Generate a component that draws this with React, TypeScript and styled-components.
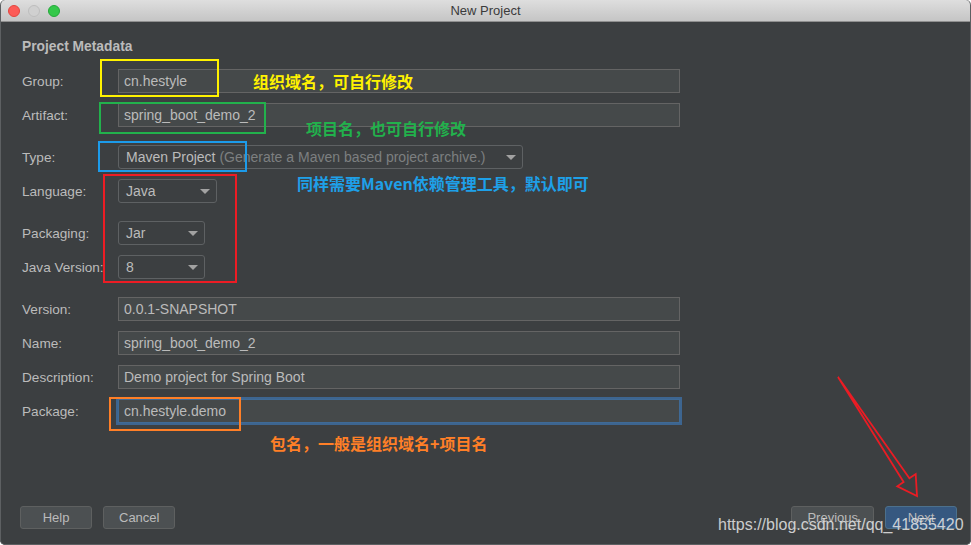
import React from "react";
import styled, { createGlobalStyle } from "styled-components";

const Global = createGlobalStyle`
  html, body { margin: 0; padding: 0; background: #ffffff; }
  body { width: 971px; height: 545px; overflow: hidden; font-family: "Liberation Sans", Arial, sans-serif; }
  #root { width: 971px; height: 545px; }
`;

const Window = styled.div`
  position: relative;
  width: 971px;
  height: 545px;
  display: flex;
  flex-direction: column;
  background: #3c3f41;
  border-radius: 5px;
  overflow: hidden;
  &::after {
    content: "";
    position: absolute;
    inset: 0;
    border: 1px solid #5d6062;
    border-top: none;
    border-radius: 5px;
    pointer-events: none;
  }
`;

const TitleBar = styled.div`
  flex: none;
  height: 21px;
  display: grid;
  grid-template-columns: 1fr auto 1fr;
  align-items: center;
  background: linear-gradient(#dedede, #c5c5c5);
  border-bottom: 1px solid #8f8f8f;
  font: 13px "Liberation Sans", Arial, sans-serif;
  color: #3b3b3b;
`;

const Lights = styled.div`
  display: flex;
  gap: 8px;
  padding-left: 8px;
`;

const Light = styled.span<{ $fill: string; $edge: string }>`
  width: 12px;
  height: 12px;
  border-radius: 50%;
  box-sizing: border-box;
  background: ${(p) => p.$fill};
  border: 1px solid ${(p) => p.$edge};
`;

const Content = styled.div`
  flex: 1;
  display: flex;
  flex-direction: column;
  padding: 17px 14px 16px 20px;
  color: #bbbbbb;
`;

const Heading = styled.div`
  font-weight: bold;
  font-size: 13.8px;
  line-height: 16px;
  color: #bbbbbb;
  margin: 0 0 14px 2px;
`;

const Row = styled.div<{ $top: number }>`
  display: flex;
  align-items: center;
  height: 24px;
  margin-top: ${(p) => p.$top}px;
`;

const Label = styled.div`
  width: 98px;
  padding-left: 2px;
  box-sizing: border-box;
  font-size: 13.6px;
  color: #bbbbbb;
  white-space: nowrap;
`;

const TextField = styled.div<{ $focused?: boolean }>`
  width: 562px;
  height: 24px;
  box-sizing: border-box;
  display: flex;
  align-items: center;
  padding: 0 5px;
  background: #45494a;
  border: 1px solid ${(p) => (p.$focused ? "#3f6a96" : "#646464")};
  box-shadow: ${(p) => (p.$focused ? "0 0 0 2px #3d6590" : "none")};
  font-size: 14px;
  color: #bbbbbb;
`;

const Combo = styled.div<{ $width: number }>`
  width: ${(p) => p.$width}px;
  height: 24px;
  box-sizing: border-box;
  display: flex;
  align-items: center;
  justify-content: space-between;
  padding: 0 6px 0 7px;
  border: 1px solid #5e6163;
  border-radius: 3px;
  background: #3c3f41;
  font-size: 14px;
  color: #bbbbbb;
  white-space: nowrap;
`;

const Hint = styled.span`
  color: #7d7f80;
`;

const Caret = styled.span`
  width: 0;
  height: 0;
  border-left: 5px solid transparent;
  border-right: 5px solid transparent;
  border-top: 5px solid #a2a2a2;
`;

const Footer = styled.div`
  margin-top: auto;
  display: flex;
  justify-content: space-between;
`;

const ButtonGroup = styled.div`
  display: flex;
  gap: 11px;
`;

const Button = styled.div<{ $primary?: boolean }>`
  min-width: 72px;
  height: 23px;
  box-sizing: border-box;
  padding: 0 15px;
  display: flex;
  align-items: center;
  justify-content: center;
  border-radius: 3px;
  font-size: 13px;
  color: #bbbbbb;
  background: ${(p) => (p.$primary ? "#365880" : "#4c5052")};
  border: 1px solid ${(p) => (p.$primary ? "#4c708c" : "#5e6060")};
`;

const Overlay = styled.div`
  position: absolute;
  inset: 0;
  pointer-events: none;
`;

const Mark = styled.div<{ $x: number; $y: number; $w: number; $h: number; $c: string }>`
  position: absolute;
  left: ${(p) => p.$x}px;
  top: ${(p) => p.$y}px;
  width: ${(p) => p.$w}px;
  height: ${(p) => p.$h}px;
  box-sizing: border-box;
  border: 2px solid ${(p) => p.$c};
`;

const Note = styled.div<{ $x: number; $y: number; $c: string }>`
  position: absolute;
  left: ${(p) => p.$x}px;
  top: ${(p) => p.$y}px;
  font: bold 16px/20px "Noto Sans CJK SC", "Liberation Sans", sans-serif;
  color: ${(p) => p.$c};
  white-space: nowrap;
`;

const Watermark = styled.div`
  position: absolute;
  left: 718px;
  top: 516px;
  font: 16px/18px "Liberation Sans", Arial, sans-serif;
  color: rgba(232, 232, 232, 0.85);
  white-space: nowrap;
`;

const ArrowSvg = styled.svg`
  position: absolute;
  left: 0;
  top: 0;
`;

type FieldRow = { label: string; top: number; value: string; focused?: boolean };

const lower: FieldRow[] = [
  { label: "Version:", top: 18, value: "0.0.1-SNAPSHOT" },
  { label: "Name:", top: 10, value: "spring_boot_demo_2" },
  { label: "Description:", top: 10, value: "Demo project for Spring Boot" },
  { label: "Package:", top: 10, value: "cn.hestyle.demo", focused: true },
];

export default function App() {
  return (
    <>
      <Global />
      <Window>
        <TitleBar>
          <Lights>
            <Light $fill="#fc5b57" $edge="#e2463f" />
            <Light $fill="#d0d0d0" $edge="#bdbdbd" />
            <Light $fill="#34c84a" $edge="#24a83a" />
          </Lights>
          <span>New Project</span>
          <span />
        </TitleBar>
        <Content>
          <Heading>Project Metadata</Heading>
          <Row $top={0}>
            <Label>Group:</Label>
            <TextField>cn.hestyle</TextField>
          </Row>
          <Row $top={10}>
            <Label>Artifact:</Label>
            <TextField>spring_boot_demo_2</TextField>
          </Row>
          <Row $top={18}>
            <Label>Type:</Label>
            <Combo $width={405}>
              <span>
                Maven Project <Hint>(Generate a Maven based project archive.)</Hint>
              </span>
              <Caret />
            </Combo>
          </Row>
          <Row $top={10}>
            <Label>Language:</Label>
            <Combo $width={99}>
              <span>Java</span>
              <Caret />
            </Combo>
          </Row>
          <Row $top={18}>
            <Label>Packaging:</Label>
            <Combo $width={87}>
              <span>Jar</span>
              <Caret />
            </Combo>
          </Row>
          <Row $top={10}>
            <Label>Java Version:</Label>
            <Combo $width={87}>
              <span>8</span>
              <Caret />
            </Combo>
          </Row>
          {lower.map((r) => (
            <Row key={r.label} $top={r.top}>
              <Label>{r.label}</Label>
              <TextField $focused={r.focused}>{r.value}</TextField>
            </Row>
          ))}
          <Footer>
            <ButtonGroup>
              <Button>Help</Button>
              <Button>Cancel</Button>
            </ButtonGroup>
            <ButtonGroup>
              <Button>Previous</Button>
              <Button $primary>Next</Button>
            </ButtonGroup>
          </Footer>
        </Content>
        <Overlay>
          <Mark $x={100} $y={59} $w={119} $h={38} $c="#fff200" />
          <Note $x={253} $y={71} $c="#fff200">组织域名，可自行修改</Note>
          <Mark $x={99} $y={102} $w={167} $h={32} $c="#22b14c" />
          <Note $x={306} $y={118} $c="#22b14c">项目名，也可自行修改</Note>
          <Mark $x={98} $y={141} $w={149} $h={31} $c="#1c9bea" />
          <Note $x={297} $y={173} $c="#1ea0e8">同样需要Maven依赖管理工具，默认即可</Note>
          <Mark $x={103} $y={174} $w={134} $h={109} $c="#ed1c24" />
          <Mark $x={109} $y={397} $w={132} $h={34} $c="#ff7f27" />
          <Note $x={270} $y={433} $c="#ff7f27">包名，一般是组织域名+项目名</Note>
          <ArrowSvg width="971" height="545" viewBox="0 0 971 545">
            <polygon
              points="838,377 903.6,482.1 897.3,486.3 917,496 915.7,474.1 909.4,478.3"
              fill="none"
              stroke="#ea1c24"
              strokeWidth="1.8"
              strokeLinejoin="miter"
            />
          </ArrowSvg>
          <Watermark>https://blog.csdn.net/qq_41855420</Watermark>
        </Overlay>
      </Window>
    </>
  );
}
